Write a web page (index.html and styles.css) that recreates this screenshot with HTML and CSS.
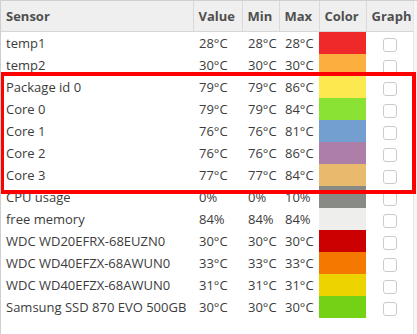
FILE: index.html
```html
<!DOCTYPE html>
<html lang="en">
<head>
    <meta charset="UTF-8">
    <meta name="viewport" content="width=device-width, initial-scale=1.0">
    <title>Sensors</title>
    <link rel="stylesheet" href="styles.css">
</head>
<body>
    <div class="frame">
        <table class="sensors">
            <colgroup>
                <col class="c-sensor">
                <col class="c-value">
                <col class="c-min">
                <col class="c-max">
                <col class="c-color">
                <col class="c-graph">
            </colgroup>
            <thead>
                <tr>
                    <th class="left">Sensor</th>
                    <th>Value</th>
                    <th>Min</th>
                    <th>Max</th>
                    <th>Color</th>
                    <th>Graph</th>
                </tr>
            </thead>
            <tbody>
                <tr><td>temp1</td><td>28°C</td><td>28°C</td><td>28°C</td><td class="swatch c1"></td><td class="graph"><span class="check"></span></td></tr>
                <tr><td>temp2</td><td>30°C</td><td>30°C</td><td>30°C</td><td class="swatch c2"></td><td class="graph"><span class="check"></span></td></tr>
                <tr><td>Package id 0</td><td>79°C</td><td>79°C</td><td>86°C</td><td class="swatch c3"></td><td class="graph"><span class="check"></span></td></tr>
                <tr><td>Core 0</td><td>79°C</td><td>79°C</td><td>84°C</td><td class="swatch c4"></td><td class="graph"><span class="check"></span></td></tr>
                <tr><td>Core 1</td><td>76°C</td><td>76°C</td><td>81°C</td><td class="swatch c5"></td><td class="graph"><span class="check"></span></td></tr>
                <tr><td>Core 2</td><td>76°C</td><td>76°C</td><td>86°C</td><td class="swatch c6"></td><td class="graph"><span class="check"></span></td></tr>
                <tr><td>Core 3</td><td>77°C</td><td>77°C</td><td>84°C</td><td class="swatch c7"></td><td class="graph"><span class="check"></span></td></tr>
                <tr><td>CPU usage</td><td>0%</td><td>0%</td><td>10%</td><td class="swatch c8"></td><td class="graph"><span class="check"></span></td></tr>
                <tr><td>free memory</td><td>84%</td><td>84%</td><td>84%</td><td class="swatch c9"></td><td class="graph"><span class="check"></span></td></tr>
                <tr><td>WDC WD20EFRX-68EUZN0</td><td>30°C</td><td>30°C</td><td>30°C</td><td class="swatch c10"></td><td class="graph"><span class="check"></span></td></tr>
                <tr><td>WDC WD40EFZX-68AWUN0</td><td>33°C</td><td>33°C</td><td>33°C</td><td class="swatch c11"></td><td class="graph"><span class="check"></span></td></tr>
                <tr><td>WDC WD40EFZX-68AWUN0</td><td>31°C</td><td>31°C</td><td>31°C</td><td class="swatch c12"></td><td class="graph"><span class="check"></span></td></tr>
                <tr><td>Samsung SSD 870 EVO 500GB</td><td>30°C</td><td>30°C</td><td>30°C</td><td class="swatch c13"></td><td class="graph"><span class="check"></span></td></tr>
            </tbody>
        </table>
        <div class="highlight"></div>
    </div>
</body>
</html>
```

FILE: styles.css
```css
body {
    margin: 0;
    font-family: "Open Sans", "Noto Sans", sans-serif;
    font-size: 13px;
    color: #3c3c3c;
    background-color: #fff;
}
.frame {
    position: relative;
    width: 417px;
    height: 334px;
    box-sizing: border-box;
    border-left: 1px solid #cfcfcf;
    border-top: 1px solid #cfcfcf;
    background-color: #fff;
    overflow: hidden;
}
.frame::after {
    content: "";
    position: absolute;
    top: 0;
    right: 0;
    width: 3px;
    height: 100%;
    background-color: #f6f6f6;
    border-left: 1px solid #e6e6e6;
}
.sensors {
    border-collapse: collapse;
    table-layout: fixed;
    width: 413px;
}
.c-sensor { width: 192px; }
.c-value { width: 49px; }
.c-min { width: 37px; }
.c-max { width: 40px; }
.c-color { width: 47px; }
.c-graph { width: 48px; }
th {
    height: 30px;
    padding: 0 5px;
    background-color: #efefef;
    border-bottom: 1px solid #d6d6d6;
    border-right: 1px solid #dadada;
    font-weight: bold;
    color: #4f4f4f;
    text-align: left;
    white-space: nowrap;
}
th:last-child {
    border-right: none;
}
th.left {
    padding-left: 5px;
}
td {
    height: 22px;
    padding: 0 0 0 6px;
    white-space: nowrap;
    overflow: hidden;
}
td:first-child {
    padding-left: 5px;
}
td.swatch {
    padding: 0;
}
td.graph {
    padding: 0;
    text-align: center;
}
.check {
    display: inline-block;
    width: 12px;
    height: 12px;
    border: 1px solid #cbcbcb;
    border-radius: 3px;
    background-color: #fff;
    vertical-align: middle;
}
.c1 { background-color: #ef2929; }
.c2 { background-color: #fcaf3e; }
.c3 { background-color: #fce94f; }
.c4 { background-color: #8ae234; }
.c5 { background-color: #729fcf; }
.c6 { background-color: #ad7fa8; }
.c7 { background-color: #e9b96e; }
.c8 { background-color: #888a85; }
.c9 { background-color: #eeeeec; }
.c10 { background-color: #cc0000; }
.c11 { background-color: #f57900; }
.c12 { background-color: #edd400; }
.c13 { background-color: #73d216; }
.highlight {
    position: absolute;
    z-index: 1;
    left: -1px;
    top: 71px;
    width: 408px;
    height: 114px;
    border: 4px solid #ff0000;
}
```
